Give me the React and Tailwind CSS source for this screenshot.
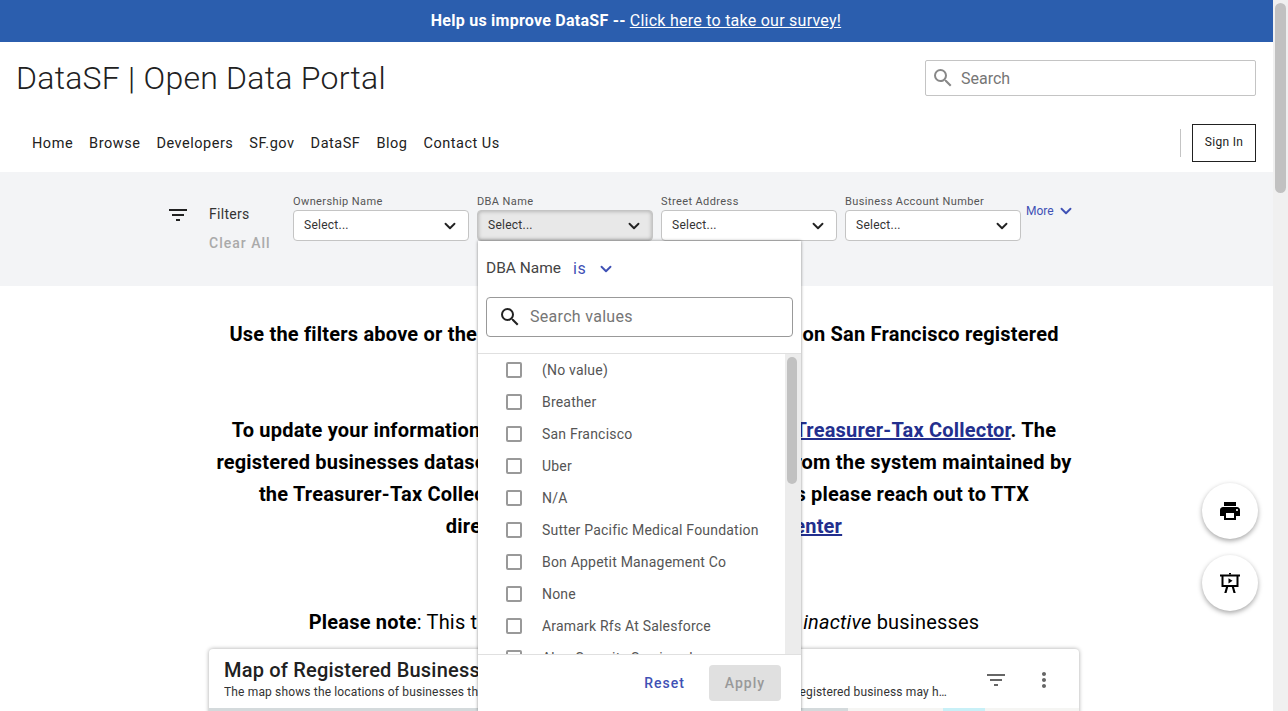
import React from 'react';
import { ChevronDown } from 'lucide-react';

const FilterListIcon = ({ className }) => (
  <svg viewBox="0 0 24 24" fill="currentColor" className={className}>
    <path d="M10 18h4v-2h-4v2zM3 6v2h18V6H3zm3 7h12v-2H6v2z" />
  </svg>
);

const SearchIcon = ({ className }) => (
  <svg viewBox="0 0 24 24" fill="currentColor" className={className}>
    <path d="M15.5 14h-.79l-.28-.27A6.471 6.471 0 0 0 16 9.5 6.5 6.5 0 1 0 9.5 16c1.61 0 3.09-.59 4.23-1.57l.27.28v.79l5 4.99L20.49 19l-4.99-5zm-6 0C7.01 14 5 11.99 5 9.5S7.01 5 9.5 5 14 7.01 14 9.5 11.99 14 9.5 14z" />
  </svg>
);

const PrintIcon = ({ className }) => (
  <svg viewBox="0 0 24 24" fill="currentColor" className={className}>
    <path d="M19 8H5c-1.66 0-3 1.34-3 3v6h4v4h12v-4h4v-6c0-1.66-1.34-3-3-3zm-3 11H8v-5h8v5zm3-7c-.55 0-1-.45-1-1s.45-1 1-1 1 .45 1 1-.45 1-1 1zm-1-9H6v4h12V3z" />
  </svg>
);

const MoreIcon = ({ className }) => (
  <svg viewBox="0 0 24 24" fill="currentColor" className={className}>
    <path d="M12 8c1.1 0 2-.9 2-2s-.9-2-2-2-2 .9-2 2 .9 2 2 2zm0 2c-1.1 0-2 .9-2 2s.9 2 2 2 2-.9 2-2-.9-2-2-2zm0 6c-1.1 0-2 .9-2 2s.9 2 2 2 2-.9 2-2-.9-2-2-2z" />
  </svg>
);

const PresentIcon = ({ className }) => (
  <svg viewBox="0 0 24 24" fill="currentColor" className={className}>
    <path d="M11 2h2v1.5h-2z" />
    <path d="M2 3.5h20v2h-1.5V16H3.500V5.500H2zm3.500 2V14h13V5.500z" fillRule="evenodd" />
    <path d="M10.500 7.200 14.500 9.800l-4 2.600z" />
    <path d="M8 16h2.200L8.500 22H6.300zM13.800 16H16l1.700 6h-2.200z" />
  </svg>
);

const filters = ['Ownership Name', 'DBA Name', 'Street Address', 'Business Account Number'];

const values = [
  '(No value)',
  'Breather',
  'San Francisco',
  'Uber',
  'N/A',
  'Sutter Pacific Medical Foundation',
  'Bon Appetit Management Co',
  'None',
  'Aramark Rfs At Salesforce',
  'Abm Security Services Inc',
];

const DbaDropdown = () => (
  <div className="absolute left-[1px] top-[31px] z-20 w-[323px] h-[470px] bg-white shadow-[0_0_3px_rgba(0,0,0,0.45)] flex flex-col">
    <div className="h-[56px] pl-2 flex items-center text-[15.500px] text-[#444]">
      <span className="mr-3">DBA Name</span>
      <span className="text-[16px] text-[#3f51b5] tracking-wide">is</span>
      <ChevronDown className="w-[18px] h-[18px] ml-[11px] text-[#3f51b5]" strokeWidth={2.5} />
    </div>
    <div className="mx-2 h-10 w-[307px] shrink-0 border border-[#999] rounded flex items-center pl-[11px]">
      <SearchIcon className="w-6 h-6 text-[#222]" />
      <span className="ml-[8px] text-[16px] tracking-[0.3px] text-[#767676]">Search values</span>
    </div>
    <div className="mt-4 border-t border-[#e0e0e0] h-[301px] shrink-0 flex overflow-hidden">
      <div className="flex-1 overflow-hidden">
        {values.map((v) => (
          <div key={v} className="h-8 shrink-0 flex items-center pl-[28px] text-[14px] tracking-[0.2px] text-[#555] whitespace-nowrap">
            <span className="w-4 h-4 border-2 border-[#999] rounded-[2px] mr-5 shrink-0" />
            {v}
          </div>
        ))}
      </div>
      <div className="w-[16px] bg-[#ececec] pt-[3px] pl-[2px]">
        <div className="w-[10px] h-[127px] rounded-full bg-[#c1c1c1]" />
      </div>
    </div>
    <div className="flex-1 border-t border-[#e0e0e0] bg-white flex items-start justify-end pr-[20px] pt-[10px]">
      <span className="h-9 flex items-center mr-6 text-[14px] font-medium tracking-[1px] text-[#3f51b5]">Reset</span>
      <span className="h-9 w-[72px] flex items-center justify-center rounded bg-[#e0e0e0] text-[14px] font-medium tracking-[1px] text-[#999]">Apply</span>
    </div>
  </div>
);

const FilterSelect = ({ label }) => {
  const isOpen = label === 'DBA Name';
  return (
    <div className="w-[176px]">
      <div className="h-[17px] pt-[2px] text-[11px] leading-[14px] tracking-[0.4px] text-[#555] whitespace-nowrap">{label}</div>
      <div className="relative">
        <div className={`h-[31px] rounded flex items-center justify-between pl-[10px] pr-[9px] text-[12px] tracking-[0.25px] text-[#333] border ${isOpen ? 'bg-[#e8e8e8] border-[#c4c4c4] shadow-[inset_0_0_4px_rgba(0,0,0,0.3)]' : 'bg-white border-[#c4c4c4]'}`}>
          <span className="-mt-[1px]">Select...</span>
          <ChevronDown className="w-[18px] h-[18px] text-[#222]" strokeWidth={2.5} />
        </div>
        {isOpen && <DbaDropdown />}
      </div>
    </div>
  );
};

export default function App() {
  return (
    <div className="h-[711px] flex overflow-hidden bg-white text-[#212121] font-['Roboto',sans-serif]">
      <div className="w-[1273px] shrink-0 flex flex-col">
        {/* survey banner */}
        <div className="h-[42px] shrink-0 bg-[#2b5eae] flex items-center justify-center text-white text-[16px] tracking-[0.25px] pr-[1px]">
          <span className="font-bold mr-1">Help us improve DataSF --</span>
          <a className="underline">Click here to take our survey!</a>
        </div>

        {/* title and search */}
        <div className="h-[130px] shrink-0 relative">
          <div className="flex justify-between pl-4 pr-[17px] pt-[18px]">
            <h1 className="text-[32px] leading-[36px] font-light tracking-[0.25px] text-[#212121]">DataSF | Open Data Portal</h1>
            <div className="w-[331px] h-9 border border-[#c4c4c4] rounded-[2px] flex items-center pl-[5px]">
              <SearchIcon className="w-[24px] h-[24px] text-[#888]" />
              <span className="ml-[6px] mt-[2px] text-[16px] text-[#767676]">Search</span>
            </div>
          </div>
          <div className="flex items-center justify-between pl-8 pr-[17px] mt-[28px]">
            <nav className="flex gap-4 mt-[2px] text-[14.500px] tracking-[0.52px] text-[#212121]">
              <span>Home</span>
              <span>Browse</span>
              <span>Developers</span>
              <span>SF.gov</span>
              <span>DataSF</span>
              <span>Blog</span>
              <span>Contact Us</span>
            </nav>
            <div className="flex items-center">
              <div className="w-px h-7 bg-[#c4c4c4] mr-[11px]" />
              <div className="w-16 h-[38px] border border-[#212121] flex items-center justify-center pb-[2px] text-[12px] tracking-[0.3px]">Sign In</div>
            </div>
          </div>
        </div>

        {/* filter bar */}
        <div className="h-[114px] shrink-0 bg-[#f3f4f6] flex pl-[166px] pt-[21px] relative z-10">
          <FilterListIcon className="w-6 h-6 mt-[10px] text-[#212121]" />
          <div className="ml-[19px] w-[84px] pt-[11px]">
            <div className="text-[14px] leading-[20px] tracking-[0.3px] text-[#333]">Filters</div>
            <div className="mt-[9px] text-[14px] leading-[20px] font-medium tracking-[1px] text-[#aaa] whitespace-nowrap">Clear All</div>
          </div>
          <div className="flex gap-2">
            {filters.map((f) => (
              <FilterSelect key={f} label={f} />
            ))}
          </div>
          <div className="ml-[5px] pt-[9px] h-fit flex items-center text-[12px] text-[#3f51b5]">
            More
            <ChevronDown className="w-[18px] h-[18px] ml-[3px]" strokeWidth={2.5} />
          </div>
        </div>

        {/* intro text */}
        <div className="flex-1 relative overflow-hidden">
          <div className="pt-[32px] w-[900px] ml-[194px] text-center text-[20px] leading-[32px] tracking-[0.2px] text-black">
            <p className="font-bold">
              Use the filters above or the datasets below to find information on San Francisco registered
              <br />
              businesses
            </p>
            <p className="font-bold mt-[32px]">
              To update your information, please contact the Offices of the{' '}
              <a className="underline text-[#232f8e]">Treasurer-Tax Collector</a>. The
              <br />
              registered businesses dataset is automatically uploaded daily from the system maintained by
              <br />
              the Treasurer-Tax Collector. For changes or other questions please reach out to TTX
              <br />
              directly or through the <a className="underline text-[#232f8e]">Support Help Center</a>
            </p>
            <p className="mt-[64px] tracking-[0.2px]">
              <span className="font-bold">Please note</span>: This table shows data on both active and{' '}
              <em>inactive</em> businesses
            </p>
          </div>

          {/* map card */}
          <div className="absolute left-[209px] top-[363px] w-[870px] h-[80px] bg-white rounded shadow-[0_0_4px_rgba(0,0,0,0.35)] overflow-hidden">
            <div className="flex items-start justify-between h-[59px] pl-[15px] pr-[23px] pt-[9px]">
              <div className="w-[729px]">
                <div className="text-[20px] leading-[24px] font-medium tracking-[0.2px] text-[#212121]">Map of Registered Business Locations</div>
                <div className="mt-[2px] text-[12px] leading-[16px] tracking-[0.15px] truncate text-[#333]">
                  The map shows the locations of businesses that are registered in San Francisco. Please also note that a registered business may have multiple locations
                </div>
              </div>
              <div className="flex items-center gap-6 text-[#666] mt-[10px]">
                <FilterListIcon className="w-6 h-6" />
                <MoreIcon className="w-6 h-6" />
              </div>
            </div>
            <div className="h-[21px] flex">
              <div className="w-[639px] bg-[#d4dadc]" />
              <div className="flex-1 bg-[#f5f5f3] flex justify-center">
                <div className="w-[42px] bg-[#c8f0f7]" />
              </div>
            </div>
          </div>

          {/* floating buttons */}
          <div className="absolute left-[929px] top-[197px] flex flex-col gap-4 ml-[273px]">
            <div className="w-14 h-14 rounded-full bg-white shadow-[0_2px_5px_rgba(0,0,0,0.35)] flex items-center justify-center">
              <PrintIcon className="w-6 h-6 text-black" />
            </div>
            <div className="w-14 h-14 rounded-full bg-white shadow-[0_2px_5px_rgba(0,0,0,0.35)] flex items-center justify-center">
              <PresentIcon className="w-6 h-6 text-black" />
            </div>
          </div>
        </div>
      </div>

      {/* page scrollbar */}
      <div className="w-[15px] shrink-0 bg-[#f0f0f0] pt-[3px] pl-[2px]">
        <div className="w-[11px] h-[190px] rounded-full bg-[#c1c1c1]" />
      </div>
    </div>
  );
}
